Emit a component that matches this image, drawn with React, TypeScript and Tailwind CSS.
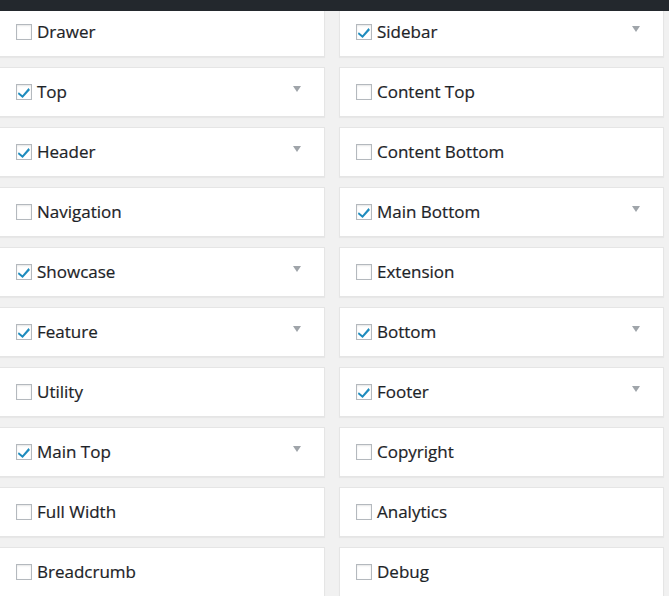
const left = [
  { label: "Drawer", on: false },
  { label: "Top", on: true },
  { label: "Header", on: true },
  { label: "Navigation", on: false },
  { label: "Showcase", on: true },
  { label: "Feature", on: true },
  { label: "Utility", on: false },
  { label: "Main Top", on: true },
  { label: "Full Width", on: false },
  { label: "Breadcrumb", on: false },
];

const right = [
  { label: "Sidebar", on: true },
  { label: "Content Top", on: false },
  { label: "Content Bottom", on: false },
  { label: "Main Bottom", on: true },
  { label: "Extension", on: false },
  { label: "Bottom", on: true },
  { label: "Footer", on: true },
  { label: "Copyright", on: false },
  { label: "Analytics", on: false },
  { label: "Debug", on: false },
];

function Box({ on }: { on: boolean }) {
  return (
    <span className="flex h-4 w-4 shrink-0 items-center justify-center border border-[#b4b9be] bg-white shadow-[inset_0_1px_2px_rgba(0,0,0,0.1)]">
      {on && (
        <svg viewBox="0 0 16 16" className="h-[15px] w-[15px]">
          <path d="M2 7.6 L6.2 11 L13.2 2.8 L14.8 5.2 L6.4 14.2 L1 9.8 Z" fill="#1e8cbe" />
        </svg>
      )}
    </span>
  );
}

function Row({ label, on }: { label: string; on: boolean }) {
  return (
    <div className="flex h-[50px] items-center border border-[#e5e5e5] bg-white pl-[16px] pr-[23px] shadow-[0_1px_1px_rgba(0,0,0,0.04)]">
      <Box on={on} />
      <span className="-mt-[2px] ml-[5px] text-[17px] leading-none text-[#1d2327] [-webkit-text-stroke:0.2px_#1d2327]">
        {label}
      </span>
      {on && (
        <span className="ml-auto -mt-[7px] h-0 w-0 border-x-[4.5px] border-t-[6px] border-x-transparent border-t-[#a0a5aa]" />
      )}
    </div>
  );
}

export default function App() {
  return (
    <div className="relative min-h-[596px] overflow-hidden bg-[#f1f1f1] pt-[7px] font-['Open_Sans',sans-serif]">
      <div className="absolute inset-x-0 top-0 z-10 h-[11px] bg-[#23282d]" />
      <div className="-ml-px grid grid-cols-[326px_325px] gap-x-[14px] gap-y-[10px]">
        {left.map((item, i) => (
          <div key={item.label} className="contents">
            <Row {...item} />
            <Row {...right[i]} />
          </div>
        ))}
      </div>
    </div>
  );
}
